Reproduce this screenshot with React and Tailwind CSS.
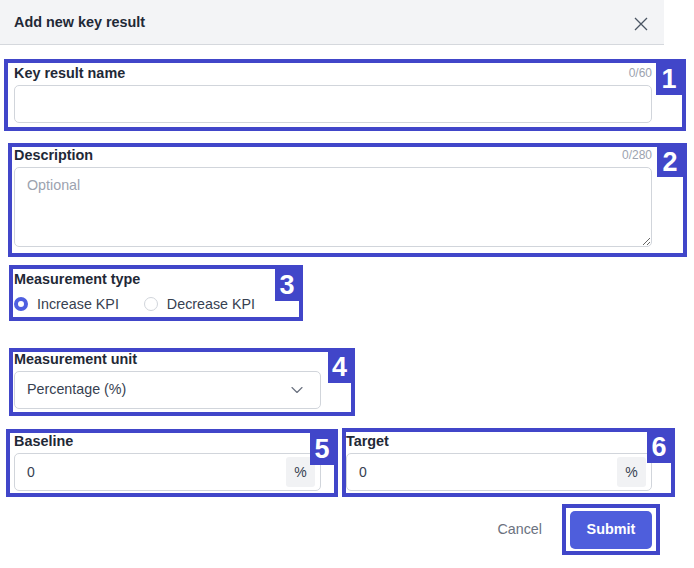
import React from 'react';
import { ChevronDown } from 'lucide-react';

function Marked({ n, className, badge = 'w-[26px] h-[32px]', children }) {
  return (
    <div className={`relative border-4 border-[#4146c9] ${className}`}>
      {children}
      {/* Annotation number */}
      {n && (
        <div className={`absolute top-0 right-0 bg-[#4146c9] text-white font-bold text-[27px] leading-none flex items-center justify-center ${badge}`}>
          {n}
        </div>
      )}
    </div>
  );
}

function Radio({ checked, label }) {
  return (
    <label className="flex items-center gap-[9px]">
      {checked ? (
        <span className="w-[14px] h-[14px] rounded-full border-[4px] border-[#4f5fe0] bg-white" />
      ) : (
        <span className="w-[14px] h-[14px] rounded-full border border-[#d1d5db] bg-white" />
      )}
      <span className="text-[14.3px] text-[#374151] leading-4">{label}</span>
    </label>
  );
}

function PercentInput({ className }) {
  return (
    <div className={`h-[38px] border border-[#d1d5db] rounded-[5px] flex items-center justify-between pl-[12px] pr-[5px] ${className}`}>
      <span className="text-[14px] text-[#374151]">0</span>
      <span className="w-[29px] h-[30px] bg-[#f1f2f4] rounded-[3px] flex items-center justify-center text-[14px] text-[#374151]">%</span>
    </div>
  );
}

export default function App() {
  return (
    <div className="w-[694px] h-[568px] bg-white font-['Liberation_Sans',Arial,sans-serif] text-[#1f2937] overflow-hidden">
      {/* Header */}
      <div className="w-[664px] h-[45px] bg-[#f3f4f6] border-b border-[#d5d8dd] flex items-center justify-between pl-[14px] pr-[16px]">
        <h2 className="text-[14.4px] font-bold leading-4 mb-[1px]">Add new key result</h2>
        <svg width="14" height="14" viewBox="0 0 14 14" className="mt-[3px]">
          <path d="M1 1L13 13M13 1L1 13" stroke="#4b5563" strokeWidth="1.3" fill="none" />
        </svg>
      </div>

      {/* Key result name */}
      <Marked n="1" className="mt-[14px] ml-[4px] w-[682px] h-[72px]" badge="w-[26px] h-[32px]">
        <div className="pl-[6px] pr-[30px] pt-[2px]">
          <div className="flex items-center justify-between leading-4">
            <span className="text-[14.4px] font-bold">Key result name</span>
            <span className="text-[12px] text-[#9ca3af]">0/60</span>
          </div>
          <div className="mt-[4px] h-[38px] border border-[#d1d5db] rounded-[5px]" />
        </div>
      </Marked>

      {/* Description */}
      <Marked n="2" className="mt-[12px] ml-[8px] w-[679px] h-[114px]" badge="w-[26px] h-[30px]">
        <div className="pl-[2px] pr-[31px]">
          <div className="flex items-center justify-between leading-4">
            <span className="text-[14.4px] font-bold">Description</span>
            <span className="text-[12px] text-[#9ca3af]">0/280</span>
          </div>
          <textarea
            placeholder="Optional"
            className="block mt-[4px] w-full h-[80px] border border-[#d1d5db] rounded-[5px] px-[12px] py-[7px] text-[14.3px] placeholder:text-[#9ca3af] outline-none"
          />
        </div>
      </Marked>

      {/* Measurement type */}
      <Marked n="3" className="mt-[8px] ml-[9px] w-[294px] h-[56px]" badge="w-[24px] h-[32px]">
        <div className="pl-[1px] pt-[2px]">
          <div className="text-[14.4px] font-bold leading-4">Measurement type</div>
          <div className="mt-[9px] flex items-center gap-[25px]">
            <Radio checked label="Increase KPI" />
            <Radio label="Decrease KPI" />
          </div>
        </div>
      </Marked>

      {/* Measurement unit */}
      <Marked n="4" className="mt-[27px] ml-[9px] w-[346px] h-[68px]" badge="w-[23px] h-[31px]">
        <div className="pl-[1px]">
          <div className="text-[14.4px] font-bold leading-[14px]">Measurement unit</div>
          <div className="mt-[5px] w-[307px] h-[38px] border border-[#d1d5db] rounded-[5px] flex items-center justify-between pl-[12px] pr-[13px]">
            <span className="text-[14.3px] text-[#374151]">Percentage (%)</span>
            <ChevronDown size={20} strokeWidth={1.4} className="text-[#6b7280]" />
          </div>
        </div>
      </Marked>

      {/* Baseline / Target */}
      <div className="mt-[12px] flex items-start">
        <Marked n="5" className="mt-[1px] ml-[6px] w-[332px] h-[68px]" badge="w-[24px] h-[32px]">
          <div className="pl-[4px]">
            <div className="text-[14.4px] font-bold leading-4">Baseline</div>
            <PercentInput className="mt-[4px] w-[307px]" />
          </div>
        </Marked>
        <Marked n="6" className="ml-[4px] w-[333px] h-[69px]" badge="w-[24px] h-[31px]">
          <div className="pt-[1px]">
            <div className="text-[14.4px] font-bold leading-4">Target</div>
            <PercentInput className="mt-[4px] w-[306px]" />
          </div>
        </Marked>
      </div>

      {/* Footer */}
      <div className="mt-[7px] flex items-center justify-end pr-[34px]">
        <button className="text-[14.3px] text-[#6b7280] mr-[20px]">Cancel</button>
        <Marked className="w-[98px] h-[51px]">
          <div className="pt-[3px] flex justify-center">
            <button className="w-[82px] h-[38px] rounded-[5px] bg-[#4e5edc] text-white text-[14.4px] font-bold">
              Submit
            </button>
          </div>
        </Marked>
      </div>
    </div>
  );
}
